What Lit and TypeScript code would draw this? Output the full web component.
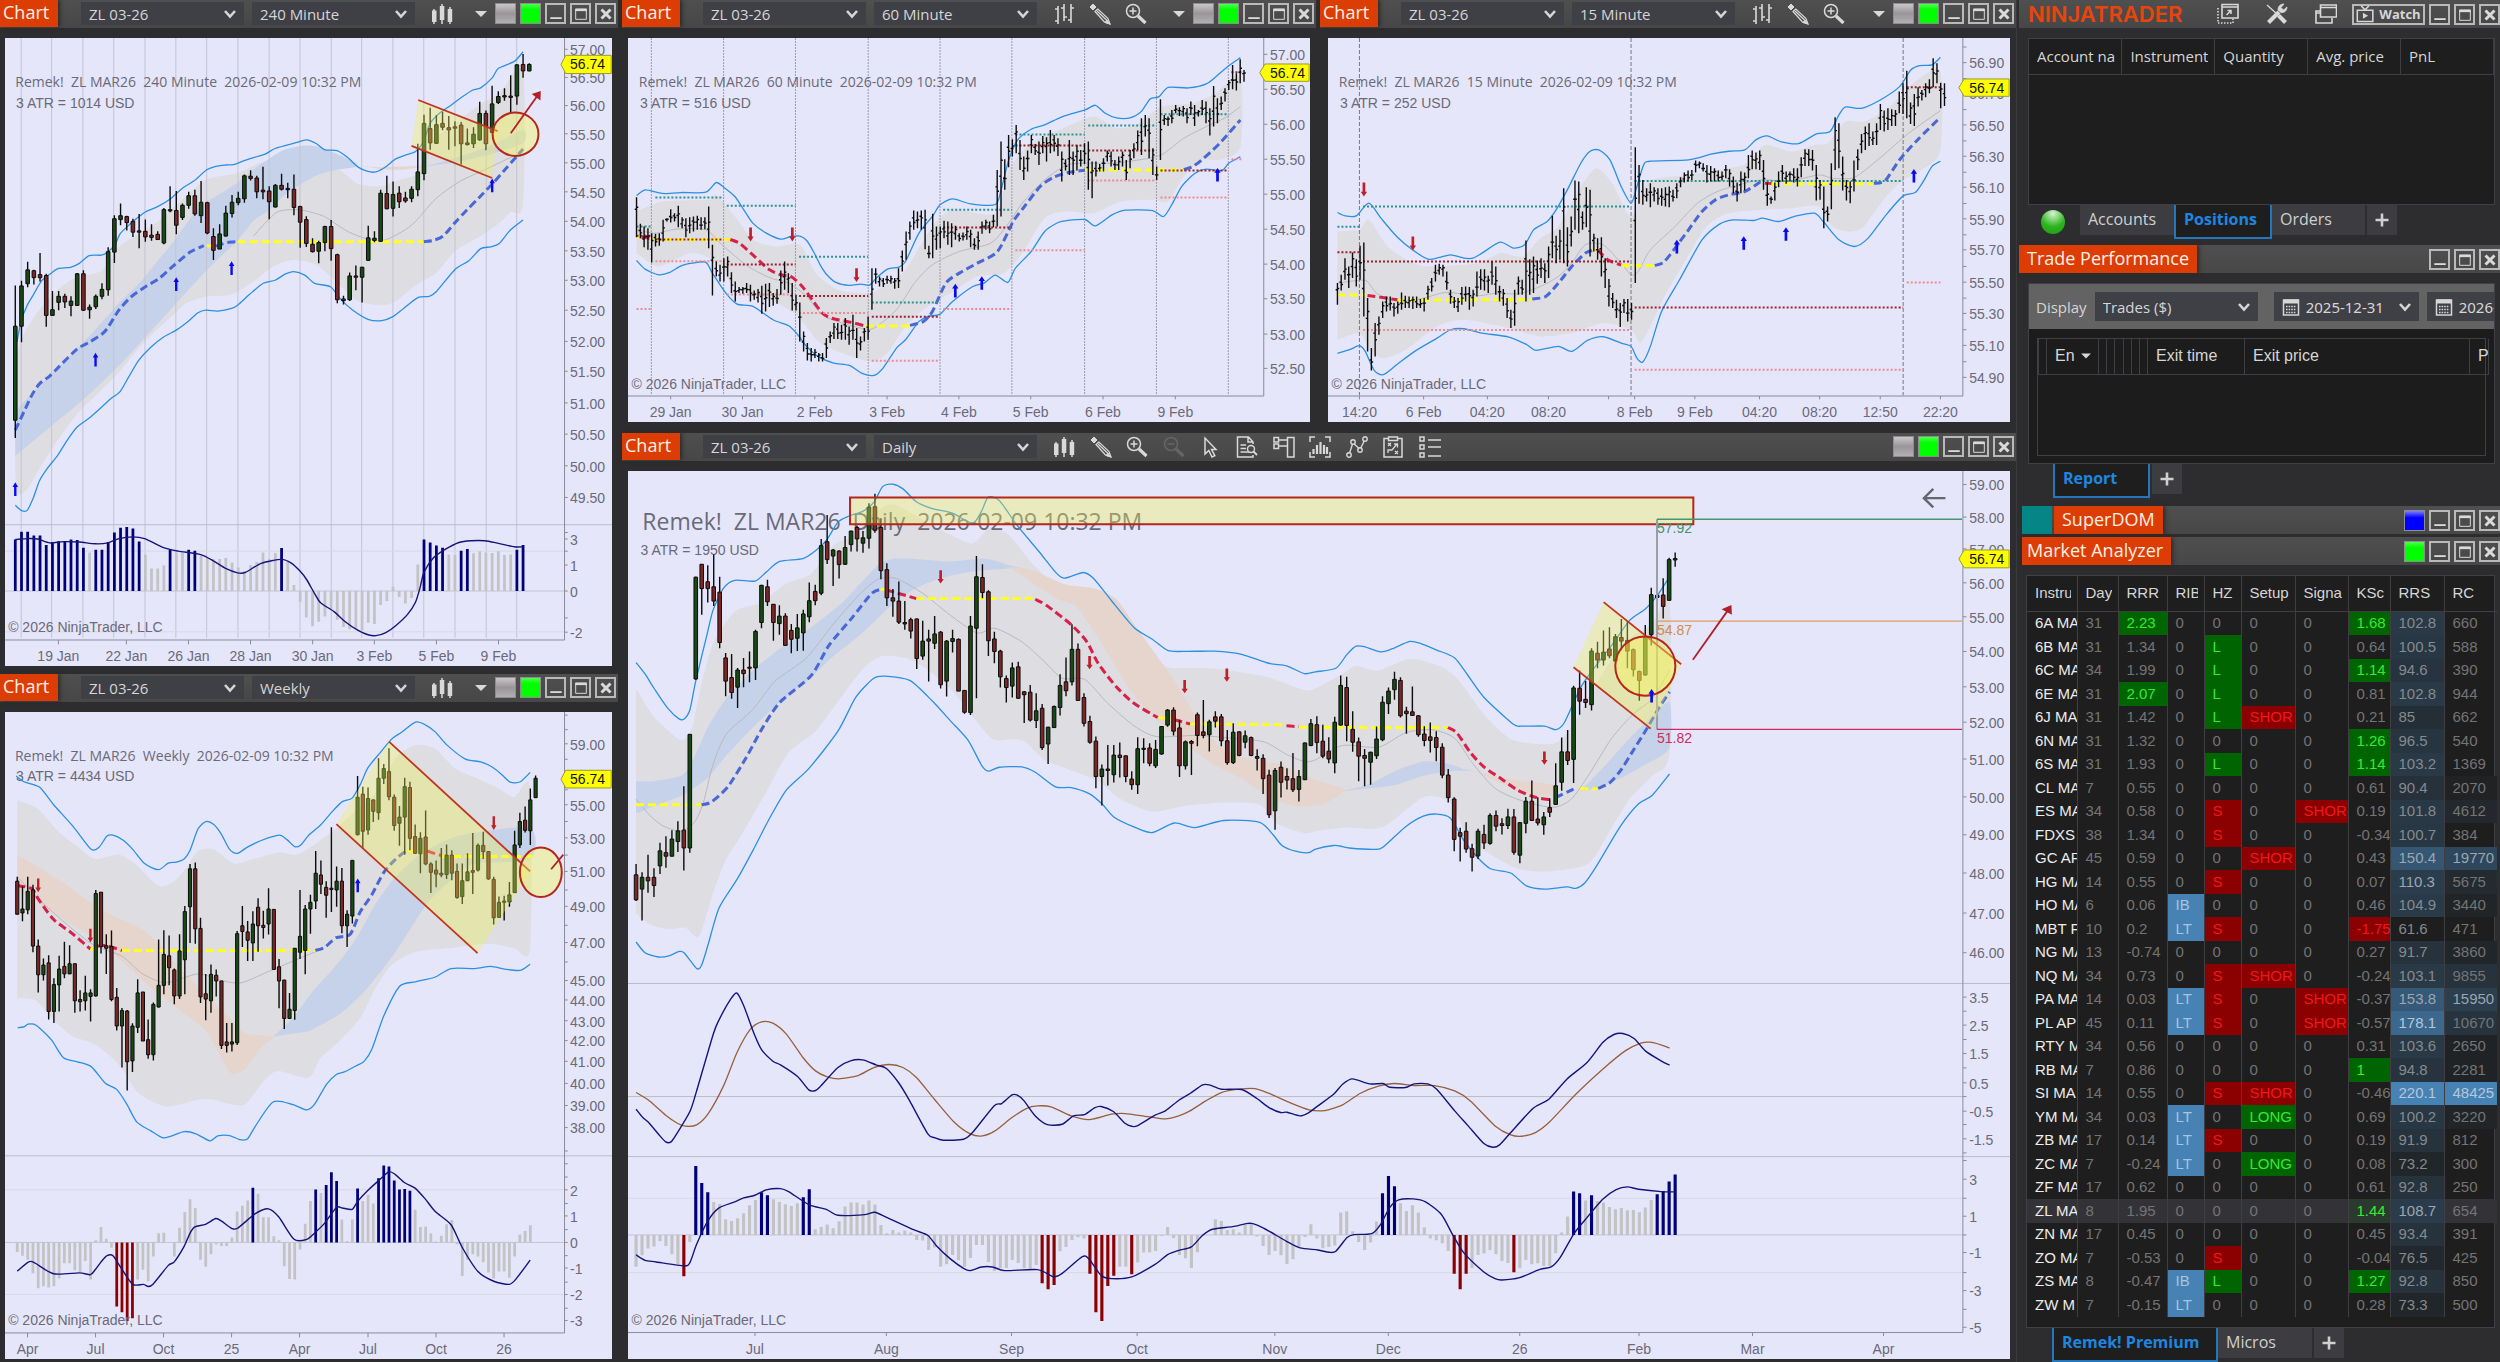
import { LitElement, html, svg, css, nothing, TemplateResult } from "lit";
import { customElement, property } from "lit/decorators.js";
import { classMap } from "lit/directives/class-map.js";

/* ------------------------------------------------------------------ */
/* Geometry helpers                                                    */
/* ------------------------------------------------------------------ */

type Pt = [number, number];

/** Parses "x,y x,y ..." and optionally moves / scales the points. */
const pts = (text: string, dx = 0, dy = 0, ky = 1): Pt[] =>
  text
    .trim()
    .split(/\s+/)
    .map((p) => {
      const [x, y] = p.split(",").map(Number);
      return [x + dx, y * ky + dy] as Pt;
    });

/** Catmull-Rom spline through the points. */
const spline = (p: Pt[]): string => {
  let d = `M${p[0][0]} ${p[0][1]}`;
  for (let i = 0; i < p.length - 1; i++) {
    const a = p[i - 1] ?? p[i];
    const b = p[i];
    const c = p[i + 1];
    const e = p[i + 2] ?? c;
    const f = (n: number) => n.toFixed(1);
    d += `C${f(b[0] + (c[0] - a[0]) / 8)} ${f(b[1] + (c[1] - a[1]) / 8)} ${f(c[0] - (e[0] - b[0]) / 8)} ${f(
      c[1] - (e[1] - b[1]) / 8
    )} ${f(c[0])} ${f(c[1])}`;
  }
  return d;
};

const line = (p: Pt[], cls: string) => svg`<path class=${"ln " + cls} d=${spline(p)} />`;
const area = (p: Pt[], cls: string) => svg`<path class=${cls} d=${spline(p) + "Z"} />`;
const poly = (text: string, cls: string, dx = 0) =>
  svg`<polygon class=${cls} points=${pts(text, dx).map((p) => p.join(",")).join(" ")} />`;
const seg = (x1: number, y1: number, x2: number, y2: number, cls: string) =>
  svg`<line class=${"ln " + cls} x1=${x1} y1=${y1} x2=${x2} y2=${y2} />`;

/** Candles: "high bodyTop bodyBottom low g|r; ..." spaced by step. */
const candles = (x0: number, step: number, w: number, text: string) => {
  let wick = "";
  let up = "";
  let down = "";
  text
    .trim()
    .split(";")
    .forEach((row, i) => {
      const v = row.trim().split(" ");
      const [h, t, b, l] = v.map(Number);
      const x = x0 + step * i;
      wick += `M${x.toFixed(1)} ${h}V${l}`;
      const box = `M${(x - w / 2).toFixed(1)} ${t}h${w}V${Math.max(b, t + 3)}h${-w}Z`;
      if (v[4] === "g") up += box;
      else down += box;
    });
  return svg`<path class="ln wick" d=${wick} /><path class="body up" d=${up} /><path class="body down" d=${down} />`;
};

/** Bars: "high-low ..." spaced by step, with open and close ticks. */
const ohlc = (x0: number, step: number, text: string) => {
  let d = "";
  text
    .trim()
    .split(/\s+/)
    .forEach((row, i) => {
      const [h, l] = row.split("-").map(Number);
      const x = x0 + step * i;
      const o = h + (l - h) * (0.3 + 0.4 * ((i * 7) % 5) / 5);
      const c = h + (l - h) * (0.25 + 0.5 * ((i * 3) % 4) / 4);
      d += `M${x.toFixed(1)} ${h}V${l}M${(x - 4).toFixed(1)} ${o.toFixed(0)}h4M${x.toFixed(1)} ${c.toFixed(0)}h4`;
    });
  return svg`<path class="ln wick" d=${d} />`;
};

/** Histogram: "1245n 1227 ..." where n is navy, r is dark red, plain is grey. */
const histogram = (x0: number, step: number, zero: number, w: number, text: string, dy = 0, ky = 1) => {
  const d: Record<string, string> = { n: "", r: "", g: "" };
  text
    .trim()
    .split(/\s+/)
    .forEach((row, i) => {
      const key = /[nr]$/.test(row) ? row.slice(-1) : "g";
      const y = parseFloat(row) * ky + dy;
      const x = x0 + step * i - w / 2;
      d[key] += `M${x.toFixed(1)} ${zero}V${y.toFixed(1)}h${w}V${zero}Z`;
    });
  return svg`<path class="hg" d=${d.g} /><path class="hn" d=${d.n} /><path class="hr" d=${d.r} />`;
};

/** Small signal arrow; y is the top edge. */
const signal = (x: number, y: number, h: number, dir: "up" | "dn") => {
  const w = 6;
  const head = h * 0.35;
  const d =
    dir === "up"
      ? `M${x} ${y}l${w + 1} ${head}h-4v${h - head}h-6v${head - h}h-4Z`
      : `M${x} ${y + h}l${w + 1} ${-head}h-4v${head - h}h-6v${h - head}h-4Z`;
  return svg`<path class=${dir === "up" ? "sig-up" : "sig-dn"} d=${d} />`;
};

const level = (text: string, cls: string) =>
  text
    .trim()
    .split(/\s+/)
    .map((t) => {
      const [a, b, y] = t.split(/[-@]/).map(Number);
      return seg(a, y, b, y, cls);
    });

const verticals = (xs: number[], y1: number, y2: number, cls: string) => xs.map((x) => seg(x, y1, x, y2, cls));

interface ChartSpec {
  view: [number, number, number, number];
  axisX: number;
  axisY: number;
  tagY: number;
  tagH: number;
  title: string;
  titleAt: Pt;
  bigTitle?: boolean;
  atr: string;
  atrAt: Pt;
  copyAt: Pt;
  prices: [number, string][];
  minor: number[];
  dates: [number, string][];
  datesY: number;
  back: TemplateResult | unknown;
  front: TemplateResult | unknown;
  extra?: { at: Pt; text: string; cls: string }[];
}

const rows = (text: string, dy = 0, ky = 1): [number, string][] =>
  text
    .trim()
    .split(/\s+/)
    .map((t) => {
      const [label, y] = t.split("@");
      return [Number(y) * ky + dy, label];
    });
const days = (text: string): [number, string][] =>
  text
    .trim()
    .split("|")
    .map((t) => {
      const [label, x] = t.split("@");
      return [Number(x), label];
    });

/* ------------------------------------------------------------------ */
/* 240 minute                                                          */
/* ------------------------------------------------------------------ */

const chart240: ChartSpec = {
  view: [12, 88, 1535, 1449],
  axisX: 1427,
  axisY: 1477,
  tagY: 149,
  tagH: 21,
  title: "Remek!  ZL MAR26  240 Minute  2026-02-09 10:32 PM",
  titleAt: [38, 188],
  atr: "3 ATR = 1014 USD",
  atrAt: [40, 237],
  copyAt: [20, 1446],
  prices: rows(
    "57.00@116 56.50@181 56.00@246 55.50@311 55.00@378 54.50@445 54.00@513 53.50@581 53.00@649 52.50@718 52.00@790 51.50@859 51.00@932 50.50@1004 50.00@1077 49.50@1150 3@1246 1@1306 0@1366 -2@1461"
  ),
  minor: [1229, 1272, 1426],
  dates: days("19 Jan@147|22 Jan@319|26 Jan@476|28 Jan@633|30 Jan@790|3 Feb@946|5 Feb@1103|9 Feb@1260"),
  datesY: 1514,
  back: svg`
    ${area(
      pts(
        "38,830 60,770 99,715 150,665 194,640 256,625 300,570 350,540 400,510 450,470 520,415 600,400 660,375 720,368 800,352 850,385 905,425 960,430 1010,415 1056,400 1087,330 1150,285 1215,240 1262,215 1322,165 1322,470 1290,490 1262,515 1215,545 1150,580 1103,630 1056,655 1000,695 965,705 905,695 860,660 800,612 742,600 690,615 640,650 585,680 520,685 470,700 440,725 380,775 340,815 300,860 256,900 200,950 150,1010 100,1080 68,1130 45,1140 38,1100"
      ),
      "band"
    )}
    ${area(
      pts(
        "38,950 99,890 150,845 200,800 256,745 300,700 350,655 400,600 440,555 480,505 520,468 570,440 617,410 650,385 690,360 720,345 760,337 800,338 850,355 905,382 850,392 800,405 760,425 720,450 680,485 640,510 600,555 560,590 500,645 440,705 380,765 320,825 260,880 200,930 140,975 80,1020 38,1052"
      ),
      "cloud-up"
    )}
    ${area(pts("1071,385 1150,365 1244,335 1322,300 1322,330 1244,355 1150,375"), "cloud-up")}
    ${area(pts("905,382 960,386 1040,384 1071,385 1010,392 960,390"), "cloud-dn")}
    ${verticals([53, 130, 209, 287, 366, 444, 522, 601, 680, 758, 837, 914, 993, 1071, 1150, 1229, 1306], 88, 1472, "grid")}
    ${seg(12, 1272, 1427, 1272, "lite")}${seg(12, 1364, 1427, 1364, "grid")}${seg(12, 1458, 1427, 1458, "lite")}
    ${line(pts("640,545 700,490 760,485 820,500 870,530 915,548 970,555 1040,520 1100,460 1160,420 1230,390 1322,350"), "mid")}
  `,
  front: svg`
    ${line(
      pts(
        "42,790 53,740 68,705 84,680 105,648 130,630 146,620 178,617 200,608 225,590 256,589 272,582 290,565 303,540 319,525 340,508 366,490 398,477 429,460 460,435 491,417 522,392 545,384 570,381 590,380 617,371 648,362 670,356 695,343 725,335 750,329 774,323 800,332 821,346 852,348 880,365 905,386 930,396 950,397 975,385 1000,367 1025,358 1050,350 1071,325 1087,285 1110,262 1140,243 1165,226 1195,208 1215,203 1244,180 1260,158 1300,142 1322,120"
      ),
      "env"
    )}
    ${line(
      pts(
        "38,1166 53,1178 68,1178 84,1148 99,1110 120,1080 146,1050 170,1015 194,986 225,965 256,940 280,920 303,904 325,870 350,832 380,802 413,778 445,762 475,742 500,722 520,716 550,718 585,712 601,704 630,680 665,654 695,647 720,633 742,627 770,635 795,654 835,662 860,690 890,715 930,737 965,740 993,731 1020,712 1056,687 1085,684 1103,673 1150,622 1185,602 1215,574 1240,570 1262,562 1290,531 1322,508"
      ),
      "env"
    )}
    ${line(pts("38,993 60,950 80,912 99,886 125,868 150,845 194,806 225,790 256,772 270,759 300,716 330,686 370,660 400,644 440,612 480,582 515,567"), "ma up-c")}
    ${line(pts("522,567 545,569"), "ma flat-c")}
    ${line(pts("545,568 575,560 601,558"), "ma up-c")}
    ${line(pts("601,558 1071,558"), "ma flat-c")}
    ${line(pts("1071,558 1095,555 1120,545 1150,514 1180,485 1210,457 1244,425 1280,388 1305,362 1322,344"), "ma up-c")}
    ${candles(
      38,
      15.66,
      9,
      "659 753 970 1011 g;648 660 753 790 g;604 623 655 663 g;623 625 641 657 r;584 634 641 650 r;632 636 728 754 r;672 715 728 728 g;672 684 698 716 g;678 684 697 711 r;684 695 705 730 g;630 632 705 706 g;624 632 716 718 r;703 709 715 736 g;680 684 708 713 g;654 668 684 691 g;571 581 669 683 g;497 505 582 607 g;470 498 507 520 g;498 500 514 532 r;505 511 536 547 r;494 533 536 573 r;507 534 547 558 r;518 543 548 556 r;534 541 553 554 r;480 484 561 564 g;430 484 487 490 r;441 486 520 541 r;470 474 502 508 g;443 452 474 482 g;438 452 494 498 r;418 467 498 515 g;466 468 538 541 r;527 546 578 600 r;518 540 575 575 g;475 492 545 546 g;450 467 493 502 g;443 458 468 474 g;403 406 459 468 g;393 407 412 417 r;406 411 443 458 r;385 439 443 460 r;430 441 466 506 r;425 428 478 479 g;401 428 437 440 r;422 435 438 458 r;403 437 479 497 r;475 477 513 572 r;499 507 562 570 r;550 564 581 583 r;556 560 580 608 g;521 523 560 580 g;508 523 574 602 r;586 588 692 700 r;683 690 694 703 r;629 637 692 695 g;613 637 640 670 r;616 617 640 698 g;521 549 601 602 g;534 550 555 559 g;438 446 557 558 g;406 447 482 483 r;419 449 481 500 g;430 446 466 480 r;443 457 464 468 r;430 437 458 467 g;332 397 438 453 g;265 285 401 416 g;249 297 330 346 r;266 288 331 332 g;258 285 294 301 r;268 295 300 346 r;280 293 296 338 r;282 289 332 380 r;297 330 334 336 g;294 310 332 342 g;235 262 323 325 g;255 262 332 347 r;198 240 306 307 g;211 223 237 240 g;204 221 223 233 r;174 222 225 262 r;148 150 222 242 g;125 149 164 180 r;146 149 164 165 g"
    )}
    ${poly("1057,231 1258,303 1242,410 1040,337", "zone")}
    ${seg(1057, 231, 1258, 303, "draw")}${seg(1040, 337, 1244, 411, "draw")}
    <ellipse class="ring" cx="1303" cy="310" rx="58" ry="50" />
    ${seg(1291, 308, 1358, 222, "draw red")}${poly("1367,210 1344,217 1366,232", "head")}
    ${signal(38, 1113, 32, "up")}${signal(241, 814, 32, "up")}${signal(445, 640, 32, "up")}${signal(585, 603, 32, "up")}${signal(1244, 412, 32, "up")}
    ${histogram(
      38,
      15.66,
      1364,
      7,
      "1245n 1227n 1227n 1236n 1236n 1258n 1251n 1249n 1249n 1245n 1246n 1264n 1275 1269n 1269n 1251n 1229n 1218n 1216n 1220n 1250n 1280 1312 1312 1305 1269n 1275 1275 1269n 1271n 1282 1288 1290 1290 1288 1298 1310 1318 1304 1297 1275 1290 1276 1265n 1297 1350 1389 1425 1445 1435 1423 1408 1430 1447 1452 1450 1455 1437 1440 1396 1387 1354 1378 1393 1380 1303 1245n 1252n 1259n 1264n 1280 1281 1271n 1267n 1277 1272 1275 1276 1272 1281 1280 1269n 1258n"
    )}
    ${line(
      pts(
        "38,1245 70,1243 95,1244 125,1253 160,1250 200,1251 240,1255 272,1253 300,1243 335,1239 365,1243 413,1264 450,1272 507,1280 540,1295 570,1312 600,1322 620,1321 660,1300 711,1291 735,1299 758,1318 775,1338 795,1370 810,1391 845,1412 870,1433 905,1455 930,1465 950,1467 975,1460 1000,1444 1030,1418 1050,1390 1062,1355 1071,1322 1095,1288 1125,1268 1160,1252 1190,1248 1225,1248 1260,1254 1300,1262 1322,1262"
      ),
      "navy"
    )}
    ${seg(12, 1211, 1547, 1211, "split")}
  `,
};

/* ------------------------------------------------------------------ */
/* Weekly                                                              */
/* ------------------------------------------------------------------ */

const chartWeekly: ChartSpec = {
  view: [12, 97, 1535, 1465],
  axisX: 1427,
  axisY: 1503,
  tagY: 249,
  tagH: 20,
  title: "Remek!  ZL MAR26  Weekly  2026-02-09 10:32 PM",
  titleAt: [37, 196],
  atr: "3 ATR = 4434 USD",
  atrAt: [40, 243],
  copyAt: [20, 1474],
  prices: rows(
    "59.00@171 55.00@309 53.00@384 51.00@460 49.00@539 47.00@621 45.00@707 44.00@751 43.00@798 42.00@843 41.00@890 40.00@940 39.00@990 38.00@1040 2@1181 1@1240 0@1300 -1@1358 -2@1418 -3@1477"
  ),
  minor: [104, 137, 204, 273, 345, 421, 500, 580, 663, 1091, 1120, 1150, 1210, 1269, 1328, 1388, 1447],
  dates: days("Apr@69|Jul@241|Oct@413|25@585|Apr@757|Jul@930|Oct@1102|26@1274"),
  datesY: 1540,
  back: svg`
    ${area(
      pts(
        "43,297 96,317 150,370 200,405 240,430 300,420 340,440 400,490 440,480 470,450 500,412 540,408 590,440 640,430 705,415 750,420 790,400 850,360 900,320 960,270 1000,200 1050,172 1100,180 1150,225 1200,245 1260,270 1300,290 1340,270 1340,630 1300,632 1240,622 1150,630 1050,640 990,670 950,720 910,790 860,840 810,880 780,925 700,910 660,940 620,985 580,985 540,975 500,975 420,990 350,960 300,895 240,850 180,830 130,790 90,750 43,745"
      ),
      "band"
    )}
    ${area(
      pts(
        "43,420 100,450 170,490 230,530 290,560 350,585 400,620 450,675 500,720 540,755 580,790 620,825 690,832 660,855 620,905 585,916 560,880 520,820 480,790 430,755 380,720 330,680 280,640 220,600 150,560 100,530 43,500"
      ),
      "cloud-dn"
    )}
    ${area(
      pts(
        "690,832 740,790 790,730 850,670 900,610 950,530 1000,470 1060,420 1120,390 1180,373 1340,360 1340,430 1200,440 1150,470 1080,530 1000,640 930,720 860,780 780,820"
      ),
      "cloud-up"
    )}
    ${seg(12, 1179, 1427, 1179, "lite")}${seg(12, 1298, 1427, 1298, "grid")}${seg(12, 1416, 1427, 1416, "lite")}
    ${line(pts("43,470 120,540 228,620 308,650 360,690 420,710 500,690 560,705 610,710 690,680 797,640"), "mid")}
  `,
  front: svg`
    ${line(
      pts(
        "40,242 60,255 99,267 135,307 185,357 230,408 250,403 270,378 285,376 310,387 335,408 365,440 400,454 425,439 445,437 465,430 480,410 500,362 520,345 540,352 560,375 580,408 600,417 625,403 660,388 705,376 725,386 745,402 760,398 780,376 810,353 840,322 865,300 890,292 910,262 930,223 960,190 990,158 1015,143 1050,120 1075,126 1100,142 1130,172 1175,203 1215,210 1245,222 1270,240 1290,256 1315,255 1340,234"
      ),
      "env"
    )}
    ${line(
      pts(
        "44,812 60,810 70,804 85,804 100,813 130,840 160,880 195,889 230,900 265,937 295,952 320,985 345,1025 380,1045 410,1061 430,1058 465,1047 495,1052 530,1068 550,1057 580,1056 605,1065 625,1064 645,1035 690,980 740,986 775,998 795,985 825,940 850,918 870,912 900,898 920,888 940,860 970,785 1010,718 1050,708 1100,697 1140,678 1200,678 1240,673 1275,679 1315,682 1340,668"
      ),
      "env"
    )}
    ${line(pts("43,490 80,497 96,520 135,567 180,597 228,634"), "ma down-c")}
    ${line(pts("228,636 244,630"), "ma flat-c")}
    ${line(pts("245,627 268,626 308,637"), "ma down-c")}
    ${line(pts("308,637 797,637"), "ma flat-c")}
    ${line(pts("797,637 820,630 850,608 885,600 910,550 940,510 970,460 1000,430 1025,412"), "ma up-c")}
    ${line(pts("1030,412 1078,412"), "ma flat-c")}
    ${line(pts("1080,412 1115,422"), "ma down-c")}
    ${line(pts("1115,424 1345,424"), "ma flat-c")}
    ${candles(
      43,
      13.24,
      8,
      "470 480 555 555 r;492 543 552 571 g;470 503 545 555 g;488 500 627 641 r;612 627 692 732 r;655 670 692 705 g;648 665 775 793 r;700 714 775 801 g;649 679 715 775 g;617 673 690 700 r;625 667 690 690 g;667 667 751 778 r;727 748 753 775 r;694 733 751 773 g;725 733 741 798 g;500 508 740 741 g;505 505 628 644 r;600 626 632 690 r;592 628 748 752 r;722 743 808 818 r;767 773 808 902 g;772 774 889 954 r;802 808 887 912 g;702 733 811 824 g;731 731 842 842 r;793 839 873 882 r;755 759 873 886 g;612 716 765 766 g;591 646 716 736 g;603 649 676 716 r;678 681 740 759 r;600 638 740 747 g;536 549 658 736 g;441 452 538 620 g;438 452 588 622 r;563 587 742 756 r;690 735 747 795 r;669 691 751 778 g;680 693 706 741 r;706 706 852 860 r;801 844 852 868 r;801 844 849 866 g;593 599 846 851 g;536 581 594 629 r;570 595 614 661 r;548 577 620 661 g;519 539 581 640 r;547 580 585 610 r;496 543 577 601 g;543 544 680 681 r;656 674 706 768 r;703 704 791 815 r;733 770 791 792 g;632 632 773 794 g;500 605 641 656 g;534 543 637 691 g;511 528 543 599 g;412 462 525 543 g;433 466 487 509 r;480 494 512 563 r;358 496 499 550 r;447 480 500 538 g;450 480 581 598 r;546 555 581 629 g;433 433 559 576 g;242 290 375 376 g;266 283 367 405 r;268 293 364 375 g;295 296 322 346 r;202 247 325 341 g;215 225 247 260 g;179 232 289 297 r;284 290 354 366 r;310 335 349 400 g;246 266 335 420 g;255 268 383 410 r;352 379 417 418 r;369 383 418 462 g;320 380 441 444 r;437 441 460 507 r;433 455 464 494 r;405 462 466 471 r;397 421 465 475 g;410 421 462 478 r;440 458 517 520 r;440 479 515 532 g;417 459 479 480 g;371 456 460 509 r;395 399 455 458 g;368 399 413 430 r;412 413 475 477 r;470 476 563 578 r;515 528 562 563 g;513 525 528 569 r;482 511 527 538 g;366 398 506 507 g;325 345 398 405 g;311 342 365 370 r;270 296 366 398 g;241 247 291 292 g"
    )}
    ${poly("983,164 1340,458 1207,643 850,351", "zone")}
    ${seg(983, 164, 1340, 458, "draw")}${seg(850, 351, 1207, 643, "draw")}
    <ellipse class="ring" cx="1367" cy="460" rx="53" ry="56" />
    ${seg(1393, 453, 1424, 420, "draw red")}
    ${signal(96, 474, 31, "dn")}${signal(228, 588, 31, "dn")}${signal(1248, 333, 31, "dn")}${signal(904, 474, 31, "up")}
    ${histogram(
      43,
      13.24,
      1298,
      7,
      "1320 1328 1337 1368 1402 1397 1400 1397 1380 1345 1345 1361 1365 1340 1382 1293 1263 1290 1310 1443r 1456r 1476r 1470r 1382 1360 1386 1330 1277 1276 1298 1330 1265 1229 1200 1220 1337 1353 1325 1303 1306 1306 1287 1228 1215 1203 1174n 1188 1241 1241 1284 1293 1352 1381 1382 1314 1256 1204 1178n 1186 1168n 1139n 1159n 1246 1295 1246 1176n 1204 1190 1210 1153n 1124n 1126n 1158n 1178n 1177n 1181n 1224 1263 1262 1277 1296 1283 1257 1247 1302 1374 1337 1325 1330 1343 1366 1380 1364 1364 1378 1330 1280 1272 1259"
    )}
    ${line(
      pts(
        "43,1363 70,1343 85,1343 135,1369 200,1367 228,1371 240,1360 255,1342 270,1328 285,1328 305,1355 335,1393 362,1393 374,1398 387,1392 425,1350 440,1342 465,1307 480,1277 492,1263 519,1257 545,1244 560,1250 585,1266 600,1266 645,1233 678,1222 704,1240 743,1291 775,1291 797,1275 820,1255 850,1219 865,1220 890,1223 904,1205 930,1180 957,1158 983,1138 1000,1145 1023,1163 1049,1175 1075,1200 1100,1228 1140,1258 1168,1309 1208,1364 1248,1386 1287,1393 1305,1380 1340,1338"
      ),
      "navy"
    )}
    ${seg(12, 1102, 1547, 1102, "split")}
  `,
};

/* ------------------------------------------------------------------ */
/* 60 minute                                                           */
/* ------------------------------------------------------------------ */

const chart60: ChartSpec = {
  view: [22, 114, 1519, 1153],
  axisX: 1438,
  axisY: 1189,
  tagY: 218,
  tagH: 26,
  title: "Remek!  ZL MAR26  60 Minute  2026-02-09 10:32 PM",
  titleAt: [46, 245],
  atr: "3 ATR = 516 USD",
  atrAt: [49, 308],
  copyAt: [30, 1153],
  prices: rows("57.00@165 56.50@270 56.00@375 55.50@480 55.00@585 54.50@690 54.00@795 53.50@899 53.00@1005 52.50@1108"),
  minor: [],
  dates: days("29 Jan@117|30 Jan@277|2 Feb@438|3 Feb@599|4 Feb@759|5 Feb@919|6 Feb@1080|9 Feb@1241"),
  datesY: 1237,
  back: svg`
    ${area(
      pts(
        "41,635 100,605 200,600 218,585 260,650 300,720 350,740 405,735 440,820 490,870 560,880 600,850 640,810 700,680 745,630 840,640 870,510 920,430 1000,380 1060,350 1110,385 1160,370 1210,320 1280,310 1330,280 1386,230 1386,440 1340,480 1300,480 1260,530 1225,605 1190,600 1120,605 1060,640 1000,635 950,655 900,760 860,820 800,830 740,880 690,920 640,980 600,1060 565,1085 520,1070 450,1030 400,950 340,900 260,860 210,780 160,760 90,800 41,760"
      ),
      "band"
    )}
    ${verticals([74, 235, 395, 557, 717, 877, 1039, 1199, 1359], 114, 1187, "session")}
    ${line(
      pts(
        "41,690 83,700 130,688 195,690 235,740 290,800 340,835 380,850 420,890 460,950 540,985 570,985 620,930 660,850 700,795 760,755 830,730 870,670 900,610 950,540 1000,495 1050,490 1100,490 1160,480 1210,465 1260,415 1310,380 1350,355 1386,320"
      ),
      "mid"
    )}
  `,
  front: svg`
    ${line(
      pts(
        "41,587 60,570 85,577 105,581 140,578 195,577 218,548 235,562 260,590 280,630 300,670 330,700 362,718 385,710 405,709 420,722 435,755 450,795 465,825 485,848 515,857 540,853 560,856 575,835 600,808 625,802 640,785 670,700 700,650 717,615 745,597 785,612 840,614 853,570 870,480 890,420 920,388 950,375 990,350 1040,330 1063,316 1085,340 1110,354 1140,354 1165,335 1185,297 1205,290 1225,262 1270,264 1310,252 1340,220 1362,195 1386,173"
      ),
      "env"
    )}
    ${line(
      pts(
        "41,782 60,808 90,825 115,818 140,798 165,790 195,787 210,820 240,880 265,913 300,920 345,960 380,978 400,1005 420,1040 445,1070 480,1090 515,1097 545,1122 570,1127 590,1105 620,1045 640,1020 670,965 690,950 717,943 745,905 790,860 815,850 840,826 868,848 885,805 920,755 950,695 980,668 1000,662 1040,659 1063,678 1100,645 1130,631 1190,632 1215,650 1235,610 1255,560 1285,520 1310,508 1345,512 1360,490 1386,470"
      ),
      "env"
    )}
    ${line(pts("41,708 52,712"), "ma flat-c")}
    ${line(pts("52,712 75,716"), "ma down-c")}
    ${line(pts("75,719 250,719"), "ma flat-c")}
    ${line(pts("250,719 270,730 300,765 335,808 362,825 385,830 410,860 435,905 455,940 475,955 520,968 548,978"), "ma down-c")}
    ${line(pts("550,979 648,979"), "ma flat-c")}
    ${line(pts("650,977 680,965 700,935 730,850 760,820 800,790 845,755 880,665 905,620 940,560 970,532 1005,517 1040,511"), "ma up-c")}
    ${line(pts("1040,510 1260,510"), "ma flat-c")}
    ${line(pts("1260,509 1280,500 1300,480 1340,430 1386,360"), "ma up-c")}
    ${level("41-76@680 83-235@593 242-395@618 403-557@771 565-717@908 724-877@630 885-1039@404 1047-1199@377 1208-1359@343", "dot teal")}
    ${level("41-76@708 83-235@719 242-395@794 403-557@889 565-717@951 724-877@683 885-1039@437 1047-1199@452 1208-1359@512 1366-1390@217", "dot dark")}
    ${level("41-76@928 83-235@784 242-395@884 403-557@940 565-717@1083 724-877@928 885-1039@751 1047-1199@542 1208-1359@593 1366-1390@478", "dot pink")}
    ${ohlc(
      41,
      8.456,
      "592-712 672-715 680-742 685-750 700-788 702-740 700-738 660-725 655-665 628-668 640-665 618-682 652-685 655-712 652-700 650-695 648-690 652-690 652-688 620-745 735-887 785-830 795-845 775-845 770-830 817-880 845-905 862-880 862-882 850-880 855-905 872-900 868-908 858-942 852-935 850-922 880-918 868-912 812-885 785-870 820-880 850-932 885-932 908-1025 995-1055 1030-1082 1045-1085 1048-1075 1060-1085 1060-1085 1015-1075 995-1030 970-1018 970-1018 975-1020 955-1020 980-1035 945-1020 985-1075 1010-1052 985-1025 950-1020 805-930 805-852 830-860 835-862 828-852 828-852 835-867 805-865 752-815 695-780 665-720 632-690 635-685 632-690 630-748 738-775 642-775 680-750 680-745 663-715 665-735 670-742 678-720 700-725 698-722 680-720 690-742 715-750 695-750 665-702 660-690 665-700 645-682 510-680 425-650 478-570 405-502 418-470 375-460 420-510 470-540 452-515 405-460 432-465 425-495 408-460 412-485 390-460 405-455 415-468 455-545 478-512 420-525 455-525 435-512 450-500 430-492 425-570 485-595 485-530 492-515 475-515 452-485 455-500 480-510 470-510 455-500 480-540 450-505 430-475 392-450 355-465 345-410 355-475 445-525 500-540 298-480 345-375 350-378 330-370 315-340 322-348 318-350 325-370 305-345 315-378 330-350 300-345 305-370 325-407 258-380 295-370 290-330 265-305 240-270 195-268 220-272 178-250 210-245"
    )}
    ${signal(295, 683, 42, "dn")}${signal(388, 683, 42, "dn")}${signal(531, 805, 42, "dn")}
    ${signal(751, 852, 41, "up")}${signal(810, 829, 41, "up")}${signal(1335, 504, 41, "up")}
  `,
};

/* ------------------------------------------------------------------ */
/* 15 minute                                                           */
/* ------------------------------------------------------------------ */

const chart15: ChartSpec = {
  view: [27, 114, 1519, 1153],
  axisX: 1441,
  axisY: 1189,
  tagY: 263,
  tagH: 26,
  title: "Remek!  ZL MAR26  15 Minute  2026-02-09 10:32 PM",
  titleAt: [51, 245],
  atr: "3 ATR = 252 USD",
  atrAt: [54, 308],
  copyAt: [35, 1153],
  prices: rows(
    "56.90@190 56.70@283 56.50@377 56.30@471 56.10@564 55.90@659 55.70@752 55.50@849 55.30@943 55.10@1039 54.90@1135"
  ),
  minor: [141, 236, 329, 423, 517, 611, 705, 800, 895, 990, 1086],
  dates: days("14:20@97|6 Feb@240|04:20@382|08:20@518|@652|8 Feb@710|9 Feb@844|04:20@988|08:20@1122|12:50@1257|22:20@1391"),
  datesY: 1237,
  back: svg`
    ${area(
      pts(
        "48,695 97,690 118,660 160,740 210,785 250,800 360,790 410,760 460,770 500,715 540,680 590,560 625,505 660,550 702,650 740,545 830,525 900,510 960,490 1000,435 1060,455 1110,435 1140,430 1180,365 1220,365 1270,330 1308,280 1340,240 1391,215 1391,450 1350,510 1308,540 1270,590 1220,680 1190,695 1150,680 1120,620 1060,625 1000,630 920,640 870,680 820,790 780,880 745,980 722,1030 702,990 640,970 570,1000 500,1010 430,985 330,960 270,980 200,1050 150,1075 120,1050 97,1000 48,1020"
      ),
      "band"
    )}
    ${line(
      pts(
        "48,850 110,842 135,880 182,905 240,895 290,878 360,888 400,880 450,882 500,860 540,830 570,790 600,735 640,735 680,790 702,825 718,815 745,750 800,680 850,610 900,572 990,540 1050,545 1120,525 1150,535 1200,532 1260,470 1320,400 1391,332"
      ),
      "mid"
    )}
    ${verticals([97, 702, 1308], 114, 1187, "session dark")}
  `,
  front: svg`
    ${line(
      pts(
        "48,638 65,648 90,648 118,610 145,655 180,710 215,750 250,778 275,773 300,765 330,775 350,775 370,760 410,727 440,745 465,735 485,690 515,665 535,630 560,570 590,490 610,455 630,450 655,480 680,560 702,610 715,560 730,495 745,484 830,480 880,463 920,454 955,450 980,420 1005,408 1035,425 1075,431 1115,402 1145,395 1165,345 1180,321 1215,325 1257,300 1300,260 1325,210 1345,197 1372,195 1391,172"
      ),
      "env"
    )}
    ${line(
      pts(
        "48,1061 75,1050 97,1038 110,1055 130,1112 150,1125 180,1095 220,1055 270,1015 300,990 330,987 370,1000 430,1012 470,1035 490,1052 540,1040 570,1055 605,1022 640,1011 680,1030 702,1040 715,1075 728,1087 745,1040 770,935 810,840 860,720 900,672 930,660 975,662 995,655 1030,665 1065,650 1110,640 1130,665 1165,720 1200,740 1230,715 1270,645 1308,588 1335,578 1355,540 1372,500 1391,484"
      ),
      "env"
    )}
    ${line(pts("48,886 110,886"), "ma flat-c")}
    ${line(pts("115,887 182,900"), "ma down-c")}
    ${line(pts("182,902 480,899"), "ma flat-c")}
    ${line(pts("482,898 512,890 540,850 570,800 600,760 615,752"), "ma up-c")}
    ${line(pts("617,750 628,750"), "ma flat-c")}
    ${line(pts("628,750 650,780 680,796"), "ma down-c")}
    ${line(pts("680,797 755,797"), "ma flat-c")}
    ${line(pts("755,797 775,787 800,745 830,690 860,635 890,600 920,585 955,575 990,546"), "ma up-c")}
    ${line(pts("1000,550 1015,551"), "ma down-c")}
    ${line(pts("1015,552 1240,552"), "ma flat-c")}
    ${line(pts("1243,551 1268,542 1300,480 1340,420 1391,352"), "ma up-c")}
    ${level("48-97@681 105-702@620 710-1308@543", "dot teal")}
    ${level("48-97@757 105-702@785 710-1308@923 1316-1391@262", "dot dark")}
    ${level("105-702@991 710-1308@1110 1316-1391@848", "dot pink")}
    ${ohlc(
      48,
      8.398,
      "850-915 825-872 775-840 800-865 758-835 778-860 738-840 728-950 895-1055 1045-1112 970-1070 950-1005 905-955 890-935 890-932 910-950 905-942 878-930 888-925 890-925 890-928 890-925 898-925 895-935 858-900 835-875 795-845 792-825 795-830 815-870 870-912 892-925 895-937 862-915 860-905 862-930 870-920 815-890 808-870 808-872 828-880 785-855 800-885 858-905 868-918 895-955 930-985 870-978 830-885 840-885 722-905 778-885 770-880 782-852 775-835 790-850 740-835 648-775 708-790 690-780 565-790 682-800 650-740 542-690 545-700 635-690 562-682 570-770 702-755 715-780 712-830 775-865 838-920 880-925 900-955 910-982 898-940 898-965 910-960 442-850 495-612 540-615 565-605 550-622 562-605 565-615 565-618 562-620 560-622 570-605 550-595 532-562 518-548 512-545 510-540 482-518 485-505 490-515 495-548 498-545 505-545 512-545 515-542 495-535 508-560 530-580 548-605 515-580 518-572 465-535 452-508 458-508 452-510 480-570 548-618 590-612 548-602 515-562 495-545 515-552 515-545 505-548 505-560 472-532 448-498 448-498 450-512 495-602 540-600 560-685 620-665 490-628 352-510 370-505 470-572 540-602 545-610 482-575 448-510 402-460 380-450 370-438 395-435 370-435 312-390 332-395 325-390 328-378 330-378 275-340 250-342 212-355 308-372 282-378 262-320 270-302 250-292 238-280 175-262 190-250 248-325 250-318"
    )}
    ${signal(107, 548, 42, "dn")}${signal(216, 710, 42, "dn")}
    ${signal(804, 720, 41, "up")}${signal(953, 709, 41, "up")}${signal(1047, 682, 41, "up")}${signal(1332, 507, 41, "up")}
  `,
};

/* ------------------------------------------------------------------ */
/* Daily: price pane plus two oscillator panes                         */
/* ------------------------------------------------------------------ */

const HALF = 1555;
const LOW = 1498;
const KY = 0.9333;
const right = (t: string) => pts(t, HALF);
const low = (t: string, dx = 0) => pts(t, dx, LOW, KY);
const lowY = (y: number) => LOW + y * KY;

const chartDaily: ChartSpec = {
  view: [22, 132, 3081, 2485],
  axisX: 2998,
  axisY: 2543,
  tagY: 378,
  tagH: 25,
  title: "Remek!  ZL MAR26  Daily  2026-02-09 10:32 PM",
  titleAt: [54, 273],
  bigTitle: true,
  atr: "3 ATR = 1950 USD",
  atrAt: [50, 352],
  copyAt: [30, lowY(1081)],
  prices: [
    ...rows(
      "59.00@172 58.00@263 57.00@352 56.00@447 55.00@542 54.00@639 53.00@738 52.00@837 51.00@940 50.00@1046 49.00@1152 48.00@1259 47.00@1371 46.00@1482"
    ),
    ...rows("3.5@116 2.5@200 1.5@285 0.5@373 -0.5@458 -1.5@541 3@662 1@773 -1@882 -3@996 -5@1106", LOW, KY),
  ],
  minor: [156, 241, 326, 412, 496, 581, 604, 717, 827, 940, 1050].map(lowY),
  dates: days("Jul@305|Aug@598|Sep@877|Oct@1157|Nov@1464|Dec@1717|26@2010|Feb@2276|Mar@2529|Apr@2821"),
  datesY: lowY(1170),
  extra: [
    { at: [2316, 291], text: "57.92", cls: "t-green" },
    { at: [2316, 577], text: "54.87", cls: "t-orange" },
    { at: [2316, 879], text: "51.82", cls: "t-crimson" },
  ],
  back: svg`
    ${area(
      [
        ...pts(
          "40,740 80,820 140,885 165,850 180,760 210,620 260,525 320,500 370,450 430,420 480,340 530,310 570,250 610,225 660,255 740,310 790,335 830,290 870,310 930,400 990,465 1040,480 1100,555 1150,620 1220,680 1330,685 1450,710 1530,745"
        ),
        ...right(
          "0,740 60,700 90,678 140,690 210,658 280,680 320,720 380,820 440,885 530,895 570,850 610,760 660,660 700,600 750,560 789,500 789,920 750,985 700,1050 660,1130 620,1215 590,1240 510,1253 450,1245 390,1205 340,1160 300,1060 240,1045 150,1128 60,1130 0,1140"
        ),
        ...pts(
          "1530,1145 1470,1120 1430,1065 1350,1060 1260,1070 1190,1085 1120,1050 1070,1000 1000,965 950,940 900,885 840,885 810,850 740,740 680,680 640,655 590,650 550,680 500,760 440,860 380,920 330,1030 280,1140 240,1220 210,1320 180,1435 150,1410 110,1415 70,1400 40,1370"
        ),
      ],
      "band"
    )}
    ${area(
      pts(
        "40,1000 80,1000 140,985 165,945 200,850 240,770 300,690 360,630 430,570 500,500 545,440 580,395 610,378 660,378 740,385 820,378 870,395 900,405 870,405 800,412 740,425 680,450 630,485 590,530 540,590 480,650 430,710 360,780 300,850 240,930 200,990 150,1035 90,1065 40,1090"
      ),
      "cloud-up"
    )}
    ${area(
      pts(
        "870,400 920,408 960,430 1000,450 1060,460 1110,490 1150,560 1190,630 1230,700 1270,780 1310,860 1360,920 1420,940 1480,955 1530,985 1590,1010 1620,1025 1580,1060 1540,1070 1510,1070 1460,1050 1400,1000 1330,955 1270,900 1210,840 1150,760 1100,660 1060,580 1020,510 980,490 930,450"
      ),
      "cloud-dn"
    )}
    ${area(right("60,1028 120,1008 180,970 240,945 290,950 330,966 350,970 300,972 240,985 180,1010 120,1020"), "cloud-up")}
    ${area(right("350,970 400,985 460,1000 530,1010 540,1040 470,1035 420,1010"), "cloud-dn")}
    ${area(right("590,1028 650,950 700,880 750,820 789,780 789,905 740,950 690,985 640,1015"), "cloud-up")}
    ${seg(22, lowY(412), 2998, lowY(412), "split")}${seg(22, lowY(717), 2998, lowY(717), "lite")}
    ${seg(22, lowY(827), 2998, lowY(827), "grid")}${seg(22, lowY(940), 2998, lowY(940), "lite")}
    ${line(
      [
        ...pts(
          "40,1050 70,1095 100,1125 140,1140 170,1115 190,1060 210,960 240,870 300,800 350,720 420,655 480,560 540,475 580,435 620,433 680,475 740,535 800,585 840,572 900,610 950,665 990,712 1040,715 1090,780 1150,845 1200,875 1290,872 1370,880 1440,890 1490,925 1530,945"
        ),
        ...right(
          "0,940 60,900 140,905 200,865 260,856 310,880 350,950 400,1020 460,1055 530,1073 570,1050 610,980 660,880 710,810 750,770 789,690"
        ),
      ],
      "mid"
    )}
  `,
  front: svg`
    ${line(
      [
        ...pts(
          "40,668 60,700 80,740 110,795 135,825 147,826 160,800 173,720 200,580 212,520 235,460 260,438 305,440 330,415 360,385 412,377 440,355 465,325 490,275 515,258 545,245 570,220 590,175 612,169 635,182 665,218 700,237 745,250 790,278 810,245 825,205 850,215 890,285 940,360 975,415 995,432 1037,416 1060,433 1100,495 1150,570 1190,602 1225,634 1260,637 1330,636 1390,645 1450,670 1490,677 1530,699"
        ),
        ...right(
          "0,694 45,684 70,645 90,622 110,624 145,638 170,630 210,609 235,615 270,633 310,655 340,705 375,765 440,840 460,846 510,846 535,856 555,835 590,740 620,685 660,620 700,550 735,518 762,480 789,428"
        ),
      ],
      "env"
    )}
    ${line(
      [
        ...pts(
          "40,1450 60,1480 90,1492 115,1488 135,1477 147,1480 175,1524 186,1515 200,1460 225,1355 265,1275 300,1195 335,1110 375,1025 425,965 490,860 530,765 570,712 595,706 650,718 700,775 740,830 780,885 810,955 825,972 850,961 900,960 930,975 975,1016 1010,1018 1050,1035 1080,1065 1105,1100 1150,1128 1190,1144 1240,1117 1285,1130 1350,1110 1430,1115 1460,1150 1480,1180 1510,1196 1540,1200"
        ),
        ...right(
          "0,1190 40,1180 60,1183 75,1187 130,1191 150,1185 200,1128 240,1098 270,1092 300,1103 330,1165 360,1212 390,1245 435,1257 470,1293 510,1302 560,1296 580,1300 600,1285 625,1240 680,1125 720,1063 750,1040 789,980"
        ),
      ],
      "env"
    )}
    ${line(pts("40,1066 186,1066"), "ma flat-c")}
    ${line(pts("186,1066 208,1058 245,1015 285,935 320,855 360,780 430,705 470,620 520,545 565,475 585,463"), "ma up-c")}
    ${line(pts("585,463 598,464"), "ma flat-c")}
    ${line(pts("598,465 665,489"), "ma down-c")}
    ${line(pts("665,489 930,489"), "ma flat-c")}
    ${line(pts("930,491 955,508 1010,562 1045,610 1070,670 1110,735 1150,782 1203,822"), "ma down-c")}
    ${line(pts("1205,822 1240,826"), "ma flat-c")}
    ${line(pts("1240,828 1275,840"), "ma down-c")}
    ${line(pts("1275,840 1490,842"), "ma flat-c")}
    ${line(pts("1490,845 1518,848"), "ma down-c")}
    ${line(pts("1518,849 1850,850"), "ma flat-c")}
    ${line(right("295,850 315,865 345,920 375,960 410,990 450,1025 490,1045 525,1052"), "ma down-c")}
    ${line(right("535,1046 575,1022"), "ma up-c")}
    ${line(right("590,1021 628,1021"), "ma flat-c")}
    ${line(right("630,1020 655,1005 680,970 705,920 740,850 765,795 789,750"), "ma up-c")}
    ${candles(
      40,
      13.313,
      8,
      "1232 1262 1332 1335 r;1255 1269 1302 1390 g;1206 1269 1279 1312 r;1244 1269 1292 1324 r;1172 1195 1237 1260 g;1154 1200 1210 1242 r;1137 1162 1210 1210 g;1112 1139 1169 1198 g;1014 1137 1187 1250 r;868 869 1187 1200 g;428 429 714 716 g;392 393 461 534 r;396 442 461 500 r;366 456 496 510 r;428 471 612 628 r;641 655 720 762 r;644 710 752 769 r;683 689 737 795 g;655 689 699 737 r;637 681 683 723 r;576 581 683 717 g;450 452 556 572 g;436 456 498 510 r;504 505 556 607 r;508 538 559 590 g;530 538 620 622 r;560 578 603 642 r;532 571 600 636 g;520 532 585 635 g;444 495 540 555 g;450 469 495 508 r;322 341 474 480 g;255 330 380 392 r;350 353 370 454 g;354 356 394 433 r;314 346 393 395 g;299 300 338 357 g;285 290 322 357 r;300 319 334 361 g;222 233 320 349 g;196 232 298 305 r;264 290 411 435 r;390 408 487 510 r;462 487 496 540 r;441 496 555 560 r;496 556 560 576 r;543 548 580 601 r;545 546 657 686 r;551 608 650 660 g;576 602 608 721 r;538 588 614 630 g;580 583 730 741 r;605 608 720 763 g;576 601 609 640 g;601 603 748 748 r;745 746 807 811 r;538 566 808 815 g;370 428 572 768 g;393 430 472 488 r;466 470 607 650 r;582 602 637 670 r;632 636 708 738 r;704 713 738 780 r;668 683 734 766 g;666 680 768 769 r;748 750 758 837 r;731 751 829 833 r;754 803 830 851 g;784 796 906 913 r;848 849 896 952 g;788 791 850 851 g;701 732 794 816 g;654 722 747 762 r;561 631 722 732 g;615 631 774 775 r;754 766 838 847 r;817 833 891 895 r;875 888 987 1020 r;953 966 987 1068 g;899 966 970 1012 r;899 927 982 1004 g;892 927 934 990 r;928 929 987 1003 r;972 994 1010 1024 r;877 909 1010 1036 g;880 908 911 950 r;894 907 950 958 r;885 911 957 963 g;846 847 924 926 g;798 801 843 848 g;793 801 860 872 r;828 851 957 988 r;886 890 957 967 g;885 889 894 983 r;808 814 872 902 r;773 862 872 880 r;828 834 870 917 g;804 820 832 850 r;812 820 887 902 r;857 887 948 954 r;838 863 948 952 g;860 862 928 930 r;858 873 891 908 g;875 878 928 930 r;911 931 936 970 r;925 936 993 1036 r;968 983 1094 1103 r;963 970 1083 1136 g;945 961 1003 1046 r;964 987 997 1023 r;921 993 1024 1030 r;969 987 1023 1057 g;892 893 996 997 g;826 839 900 902 g;818 842 892 922 r;842 888 930 936 r;877 916 938 950 r;820 835 949 978 g;704 732 843 844 g;708 738 844 888 r;804 855 891 918 r;878 890 930 1000 r;910 928 936 1014 r;918 919 947 1010 g;847 882 929 938 g;762 779 884 888 g;738 748 783 812 g;694 715 744 772 g;709 718 817 822 r;792 804 811 867 r;735 806 816 817 r;815 817 870 876 r;846 868 886 902 r;836 876 886 920 r;860 878 906 944 r;894 905 983 992 r;966 983 1046 1060 r;1045 1050 1163 1196 r;1130 1144 1154 1225 r;1115 1140 1190 1200 r;1175 1189 1213 1253 r;1133 1140 1209 1218 g;1122 1149 1173 1190 r;1090 1096 1174 1178 g;1082 1096 1126 1140 r;1104 1119 1124 1149 r;1077 1100 1124 1134 g;1078 1100 1199 1206 r;1115 1116 1207 1230 g;1044 1056 1118 1146 g;998 1056 1110 1110 r;1045 1106 1117 1124 r;1086 1100 1122 1150 g;1048 1074 1087 1100 r;950 1013 1065 1066 g;878 918 1003 1027 g;857 918 942 955 r;733 739 939 1005 g;690 740 776 814 r;720 771 780 795 r;628 636 786 802 g;610 642 661 684 r;578 639 661 676 g;569 630 649 656 r;588 596 664 665 g;546 598 608 634 r;553 606 636 684 r;629 632 688 707 r;690 693 718 775 r;563 596 703 705 g;459 478 590 620 g;450 480 486 521 r;432 479 511 545 r;375 380 494 495 g;360 377 381 400 g"
    )}
    <rect class="zone box" x="517" y="206" width="1880" height="75" />
    ${seg(2316, 267, 2316, 855, "rail")}
    ${seg(2316, 267, 2996, 267, "target")}${seg(2316, 552, 2996, 552, "entry")}${seg(2316, 855, 2996, 855, "stop")}
    ${poly("642,499 815,673 747,853 575,681", "zone", HALF)}
    ${seg(2197, 499, 2370, 673, "draw")}${seg(2130, 681, 2302, 853, "draw")}
    <ellipse class="ring" cx="2290" cy="678" rx="67" ry="83" />
    ${seg(2396, 660, 2474, 522, "draw red")}${poly("927,507 905,519 928,534", "head", HALF)}
    <path class="ln back-arrow" d="M2959 208H2911M2932 182L2911 208L2932 234" />
    ${signal(719, 410, 37, "dn")}${signal(1051, 650, 37, "dn")}${signal(1263, 717, 37, "dn")}${signal(1357, 685, 37, "dn")}${signal(2065, 917, 37, "dn")}
    ${signal(2304, 742, 38, "up")}
    ${line(
      [
        ...low(
          "40,400 70,425 106,468 132,492 150,501 175,497 200,465 235,380 265,280 295,210 320,188 345,192 375,225 412,295 440,335 465,352 492,359 535,349 570,325 605,316 635,325 665,355 705,420 750,490 785,524 812,530 840,515 878,475 910,448 935,440 965,443 1010,470 1050,481 1100,465 1130,463 1180,472 1220,479 1250,470 1275,455 1310,425 1345,400 1383,390 1420,388 1450,402 1500,432 1540,452 1568,455"
        ),
        ...low(
          "30,451 60,437 100,402 140,381 175,373 220,379 265,379 310,395 345,425 400,500 435,527 460,531 490,520 520,490 580,405 640,330 690,275 725,252 745,249 770,257 789,267",
          HALF
        ),
      ],
      "brown"
    )}
    ${line(
      [
        ...low(
          "40,450 55,475 68,490 90,525 106,548 118,548 130,525 160,457 175,395 212,225 225,182 252,118 265,102 280,140 305,230 320,272 345,306 362,317 400,352 425,392 440,394 452,380 490,325 518,305 545,302 575,317 598,328 625,370 650,425 690,523 705,535 725,543 770,540 790,520 838,440 855,433 878,407 890,408 905,425 930,470 957,496 990,495 1015,470 1040,466 1062,446 1077,442 1104,457 1130,492 1145,501 1157,500 1197,468 1220,455 1250,423 1275,403 1303,377 1318,377 1345,390 1390,391 1424,418 1451,445 1477,460 1491,459 1520,470 1540,460"
        ),
        ...low(
          "5,440 40,405 60,375 82,359 120,374 150,373 165,384 200,385 220,374 250,374 270,390 310,455 340,500 375,553 395,564 410,557 435,520 485,447 520,420 560,360 605,310 640,250 665,226 685,223 710,238 735,275 770,305 789,318",
          HALF
        ),
      ],
      "navy"
    )}
    ${histogram(
      40,
      13.313,
      lowY(827),
      7,
      "922 888 868 862 846 860 885 915 951r 848 620n 671n 699n 728 734 780 785 777 762 738 722 699n 708n 720 728 735 740 732 714n 690n 810 803 796 807 786 742 730 730 736 724 736 797 822 812 820 814 820 842 844 872 865 922 915 887 903 922 896 857 857 908 935 926 926 902 911 926 928 917 972r 990r 977r 876 863 842 834 838 943r 1059r 1085r 980r 949r 922 922 945r 910 880 880 875 830 803 836 887 897 926 879 830 827 780 785 812 810 820 797 795 832 860 887 875 888 914 900 865 833 795 838 867 863 859 760 756 816 848 872 850 787 702n 650n 681n 732 755 738 760 804 838 843 852 875 943r 990r 943r 926 887 883 872 885 905 911 939r 927 902 915 912 920 920 882 820 772 697n 702n 724 708n 725 730 743 750 746 753 752 759 745 722 705n 695n 667n 646n",
      LOW,
      KY
    )}
    ${line(
      [
        ...low(
          "40,887 60,903 85,908 147,920 160,910 175,855 200,785 225,746 260,728 280,716 305,708 330,692 362,688 380,697 425,736 465,751 490,768 550,766 572,759 600,775 660,812 690,828 710,860 740,898 770,927 785,934 810,923 835,923 862,934 935,931 970,952 990,942 1035,892 1050,900 1077,949 1100,958 1145,953 1197,915 1225,886 1250,873 1278,863 1303,828 1325,810 1370,802 1400,793 1415,793 1440,807 1490,846 1520,866 1560,872"
        ),
        ...low(
          "30,879 45,876 70,835 85,826 125,823 145,795 165,745 185,722 218,719 245,728 280,765 305,825 330,880 375,938 400,958 415,962 455,955 500,930 525,923 545,895 575,825 600,783 640,720 670,691 695,683 720,690 770,697 802,698",
          HALF
        ),
      ],
      "navy"
    )}
    ${seg(22, lowY(73), 3103, lowY(73), "split")}${seg(22, lowY(592), 3103, lowY(592), "split")}
  `,
};

/* ------------------------------------------------------------------ */
/* Icons                                                               */
/* ------------------------------------------------------------------ */

const glyphs: Record<string, unknown> = {
  candles: svg`<path d="M3 6v15M11 1v20M19 4v17" stroke-width="1.5"/><path class="f" d="M1 7.500h4.500v11.500H1zM8.800 3h4.500v14H8.800zM16.700 6h4.500v13h-4.500z" stroke="none"/>`,
  bars: svg`<path d="M5 3v18M5 18H2M11 1v17M11 5H8M11 14h3M18 1v19M18 5h3M18 17h-3M2 6h3" stroke-width="1.600"/>`,
  pencil: svg`<path d="M1 4l3-3 3 3-3 3z" class="f" stroke-width="1"/><path d="M6 8.500L8.800 6 19 15.500l2 5.500-5.500-2zM8 8l10 9.500M6 8.500l9.500 10.500" stroke-width="1.200"/><path class="f" d="M18 17l3 4-5-1.500z"/>`,
  zoomin: svg`<circle cx="8" cy="8" r="6.500" stroke-width="1.500"/><path d="M8 4.500v7M4.500 8h7" stroke-width="1.500"/><path d="M13 13l7.500 7" stroke-width="3.200"/>`,
  zoomout: svg`<circle cx="8" cy="8" r="6.500" stroke-width="1.500"/><path d="M4.500 8h7" stroke-width="1.500"/><path d="M13 13l7.500 7" stroke-width="3.200"/>`,
  cursor: svg`<path d="M6 2v16l3.800-3.600L13 21l2.800-1.300-3.200-6.200H17z" stroke-width="1.500"/>`,
  docsearch: svg`<path d="M17 8V6l-4.500-5H1.500v20H17v-2M12 1v5h5M4.500 9H10M4.500 12.500H10M4.500 16H13" stroke-width="1.500"/><circle cx="15" cy="13" r="3.500" stroke-width="1.400"/><path d="M17.500 15.500L21 19" stroke-width="1.800"/>`,
  panel: svg`<path d="M1 1.500h4.500V6H1zM1 8h4.500v4.500H1zM5.500 4H14M5.500 10H14M14.500 1.500H21V21h-6.500z" stroke-width="1.500"/>`,
  frame: svg`<path d="M1 6V1h5M16 1h5v5M21 16v5h-5M6 21H1v-5" stroke-width="1.500"/><path d="M4.500 18v-5M8 18V9M11.500 18V6M15 18V9M18 18v-7" stroke-width="2.200"/>`,
  nodes: svg`<circle cx="3" cy="19" r="2.200" stroke-width="1.400"/><circle cx="7" cy="6" r="2.200" stroke-width="1.400"/><circle cx="14" cy="14" r="2.200" stroke-width="1.400"/><circle cx="19" cy="3" r="2.200" stroke-width="1.400"/><path d="M3.600 17L6.500 8M8.200 8l4.600 4.200M14.800 12l3.400-7" stroke-width="1.400"/>`,
  strategy: svg`<path d="M6 2.500H2V21h18V2.500h-4M6.500 1h9v3.500h-9z" stroke-width="1.500"/><path d="M6 7l3 3M9 7l-3 3M13 15l3 3M16 15l-3 3M6 17v-3h4l5-6M12 8h3.500v3.500" stroke-width="1.300"/>`,
  list: svg`<path d="M1 1h4v4H1zM1 9h4v4H1zM1 17h4v4H1z" stroke-width="1.500"/><path d="M9 4h13M9 11h13M9 20h13" stroke-width="1.600"/>`,
  newwin: svg`<path d="M5 14V1.500h16V15H5zM5 4h16" stroke-width="1.600"/><path d="M9.500 12l4-4M10.500 7.500h3.500V11" stroke-width="1.500"/><path d="M1 5v15h15v-4" stroke-width="1.600" stroke-dasharray="1.500 1.500"/>`,
  tools: svg`<path d="M2.500 19.500L13 9" stroke-width="4"/><path class="f" d="M12 7c0-3.500 2-6 6-6l-3 3.500 2.500 2.500 3.500-3c0 4-3 6-6 5.500z" stroke-width="0.800"/><path d="M1 2l10 9" stroke-width="1.300"/><path d="M12.500 12.500l7 7" stroke-width="4"/>`,
  windows: svg`<path d="M5.500 2h16v12h-16zM5.500 4.500h16" stroke-width="1.600"/><path d="M5 8H1v12h16v-5M1 10h4" stroke-width="1.600"/>`,
  tv: svg`<path d="M1.500 6h18v13h-18zM6 1l4.500 4.500L15 1" stroke-width="1.800"/><path class="f" d="M8 9l6 3.500-6 3.500z" stroke="none"/>`,
  calendar: svg`<path d="M3.500 4h15v15h-15z" stroke-width="1.500"/><path d="M3.500 5.500h15" stroke-width="4"/><path d="M6 10.500h10M6 13.500h10M6 16.500h10" stroke-width="1.600" stroke-dasharray="1.600 1"/>`,
  chevron: svg`<path d="M6 8l5 5.500L16 8" stroke-width="2.600"/>`,
  caret: svg`<path class="f" d="M5 8h12l-6 6z" stroke="none"/>`,
  min: svg`<path d="M4 16h14" stroke-width="2.200"/>`,
  max: svg`<path d="M4.500 5h13v12.500h-13z" stroke-width="1.200"/><path d="M4 6h14" stroke-width="3"/>`,
  close: svg`<path d="M5.500 5.500l11 11M16.500 5.500l-11 11" stroke-width="3.600"/>`,
  plus: svg`<path d="M11 4.500v13M4.500 11h13" stroke-width="2.600"/>`,
};

const icon = (name: string) =>
  html`<svg class="ico" viewBox="0 0 22 22" aria-hidden="true">${glyphs[name]}</svg>`;

/* ------------------------------------------------------------------ */
/* Shared styles                                                       */
/* ------------------------------------------------------------------ */

const shared = css`
  :host {
    --frame: #2d2d30;
    --bar: #4a4a4a;
    --field: #3f3f46;
    --edge: #3f3f46;
    --ink: #d6d6d6;
    --ui: "Open Sans", "Noto Sans", sans-serif;
    --data: "Liberation Sans", Arial, sans-serif;
    font-family: var(--ui);
    color: var(--ink);
  }
  *,
  *::before,
  *::after {
    box-sizing: border-box;
  }
  button,
  select {
    margin: 0;
    border: 0;
    padding: 0;
    border-radius: 0;
    color: inherit;
    font-family: inherit;
  }
  .ico {
    display: block;
    width: 22px;
    height: 22px;
    fill: none;
    stroke: currentColor;
  }
  .ico .f {
    fill: currentColor;
  }
  .bar {
    display: flex;
    align-items: center;
    height: 28px;
    flex: none;
    background: linear-gradient(#4f4f4f, #474747);
    min-width: 0;
  }
  .name {
    align-self: stretch;
    display: flex;
    align-items: center;
    margin: 0;
    background: #dc3d05;
    color: #fff0e6;
    font-size: 18px;
    font-weight: 400;
    line-height: 24px;
    white-space: nowrap;
    box-shadow: 2px 0 4px #2a2a2a;
  }
  .grow {
    flex: 1;
  }
  .ctl {
    display: flex;
    gap: 4px;
    flex: none;
  }
  .ctl button {
    display: grid;
    place-items: center;
    width: 21px;
    height: 21px;
    border: 2px solid #b9b9b9;
    background: transparent;
    color: #dadada;
  }
  .ctl button .ico {
    width: 18px;
    height: 18px;
  }
  .ctl .link {
    border: 1px solid #8d8d8d;
  }
  .ctl .grey {
    background: linear-gradient(#c9c5c8, #999599 50%, #b3b0b3);
  }
  .ctl .green {
    background: linear-gradient(#4cff4c, #00ff00 30%);
  }
  .ctl .blue {
    background: linear-gradient(#8080ff, #0000ff 35%);
  }
  .pick {
    display: grid;
    align-items: center;
    flex: none;
  }
  .pick > * {
    grid-area: 1 / 1;
  }
  .pick > .ico {
    justify-self: end;
    margin-right: 3px;
    pointer-events: none;
  }
  .pick select {
    appearance: none;
    width: 100%;
    background: var(--field);
    color: var(--ink);
    font-size: 15px;
    line-height: 20px;
    padding: 0 8px;
  }
`;

const controls = (colours: string[]) => html`
  <div class="ctl">
    ${colours.map((c) => html`<button class=${"link " + c} aria-label=${c + " link"}></button>`)}
    <button aria-label="Minimize">${icon("min")}</button>
    <button aria-label="Maximize">${icon("max")}</button>
    <button aria-label="Close">${icon("close")}</button>
  </div>
`;

/* ------------------------------------------------------------------ */
/* Chart window                                                        */
/* ------------------------------------------------------------------ */

@customElement("chart-window")
export class ChartWindow extends LitElement {
  @property({ attribute: false }) spec!: ChartSpec;
  @property({ attribute: false }) tools: string[] = [];
  @property() interval = "";
  @property({ type: Boolean }) menu = false;

  static styles = [
    shared,
    css`
      :host {
        display: flex;
        flex-direction: column;
        min-width: 0;
        min-height: 0;
        background: var(--frame);
      }
      .name {
        padding: 0 9px 3px 3px;
        width: 58px;
      }
      .fields {
        display: flex;
        gap: 8px;
        margin-left: 23px;
      }
      .pick {
        width: 163px;
      }
      .pick select {
        height: 23px;
      }
      .tools {
        display: flex;
        gap: 14px;
        margin-left: 16px;
      }
      .tools.wide {
        flex: 0 1 388px;
        gap: 0;
        justify-content: space-between;
      }
      .tool {
        background: none;
        color: #d9d9d9;
      }
      .tool:disabled {
        color: #666;
      }
      .more {
        margin-right: 3px;
        background: none;
        color: #d9d9d9;
      }
      .bar {
        padding-right: 2px;
        padding-bottom: 1px;
      }
      .plot {
        flex: 1;
        min-height: 0;
        display: flex;
        margin: 10px 6px 0 var(--inset, 6px);
        background: #e6e6fa;
      }
      .surface {
        flex: 1;
        width: 100%;
        min-width: 0;
        height: auto;
        overflow: hidden;
      }
      text {
        font-family: var(--data);
        font-size: 14px;
        fill: #6a6a78;
        dominant-baseline: central;
        white-space: pre;
      }
      .date {
        text-anchor: middle;
      }
      .title {
        font-family: var(--ui);
      }
      .title.big {
        font-size: 23px;
      }
      .now {
        fill: #111;
      }
      .t-green {
        fill: #3f9468;
      }
      .t-orange {
        fill: #cf8b4a;
      }
      .t-crimson {
        fill: #cf2a5c;
      }
      .ln {
        fill: none;
        vector-effect: non-scaling-stroke;
        stroke-width: 1;
      }
      .band {
        fill: #dddde2;
      }
      .cloud-up {
        fill: #c6d2ea;
      }
      .cloud-dn {
        fill: #e5d5cc;
      }
      .grid {
        stroke: #c3c3d3;
      }
      .lite {
        stroke: #d8d8e6;
      }
      .split {
        stroke: #bcbcc8;
      }
      .axis {
        stroke: #8a8a9a;
      }
      .session {
        stroke: #9c9cac;
        stroke-dasharray: 2 1;
      }
      .session.dark {
        stroke: #77777f;
        stroke-dasharray: 4 2;
      }
      .mid {
        stroke: #b9b9c0;
      }
      .env {
        stroke: #2b90e0;
        stroke-width: 1.3;
      }
      .ma {
        stroke-width: 3;
        stroke-dasharray: 8 4;
      }
      .up-c {
        stroke: #4a67d6;
      }
      .down-c {
        stroke: #d8204a;
      }
      .flat-c {
        stroke: #ffff1e;
      }
      .wick {
        stroke: #0c0c0c;
        stroke-width: 1.4;
      }
      .body {
        stroke: #0c0c0c;
        stroke-width: 1;
        vector-effect: non-scaling-stroke;
      }
      .up {
        fill: #174a14;
      }
      .down {
        fill: #7d2626;
      }
      .hg {
        fill: #c3c3c6;
      }
      .hn {
        fill: #00007a;
      }
      .hr {
        fill: #8b0000;
      }
      .navy {
        stroke: #14147c;
        stroke-width: 1.4;
      }
      .brown {
        stroke: #96603f;
        stroke-width: 1.3;
      }
      .dot {
        stroke-width: 2;
        stroke-dasharray: 2 2;
      }
      .teal {
        stroke: #2a9490;
      }
      .dot.dark {
        stroke: #a0202c;
      }
      .pink {
        stroke: #f08a92;
      }
      .zone {
        fill: #f0f050;
        fill-opacity: 0.35;
      }
      .box {
        stroke: #b5261c;
        stroke-width: 2;
        vector-effect: non-scaling-stroke;
      }
      .draw {
        stroke: #c2351d;
        stroke-width: 1.8;
      }
      .draw.red {
        stroke: #b02028;
      }
      .ring {
        fill: #f5f550;
        fill-opacity: 0.4;
        stroke: #b5261c;
        stroke-width: 2;
        vector-effect: non-scaling-stroke;
      }
      .head {
        fill: #b02028;
      }
      .sig-up {
        fill: #0a0af0;
      }
      .sig-dn {
        fill: #c01f2a;
      }
      .rail {
        stroke: #9d9daa;
        stroke-width: 2;
      }
      .target {
        stroke: #45986c;
        stroke-width: 1.4;
      }
      .entry {
        stroke: #dc9c60;
        stroke-width: 1.4;
      }
      .stop {
        stroke: #cf2a5c;
        stroke-width: 1.4;
      }
      .back-arrow {
        stroke: #66666e;
        stroke-width: 2.4;
      }
      .tag {
        fill: #ffff00;
        stroke: #9a9a30;
        stroke-width: 1;
        vector-effect: non-scaling-stroke;
      }
    `,
  ];

  private label(at: Pt, text: string, cls: string) {
    const [x0, y0, w, h] = this.spec.view;
    return svg`<text class=${cls} x=${((at[0] - x0) / w) * 100 + "%"} y=${((at[1] - y0) / h) * 100 + "%"}>${text}</text>`;
  }

  private layer(content: unknown) {
    return svg`<svg width="100%" height="100%" viewBox=${this.spec.view.join(" ")} preserveAspectRatio="none">${content}</svg>`;
  }

  render() {
    const s = this.spec;
    const [x0, y0, w] = s.view;
    const ticks = [...s.prices.map((p) => p[0] - 2), ...s.minor];
    const edge = x0 + w;
    const tag = `${s.axisX - 9},${s.tagY} ${s.axisX + 3},${s.tagY - s.tagH} ${edge - 2},${s.tagY - s.tagH} ${edge - 2},${s.tagY + s.tagH} ${s.axisX + 3},${s.tagY + s.tagH}`;
    return html`
      <header class="bar">
        <h2 class="name">Chart</h2>
        <div class="fields">
          <label class="pick">
            <select aria-label="Instrument"><option>ZL 03-26</option></select>
            ${icon("chevron")}
          </label>
          <label class="pick">
            <select aria-label="Interval"><option>${this.interval}</option></select>
            ${icon("chevron")}
          </label>
        </div>
        <div class=${classMap({ tools: true, wide: this.tools.length > 5 })}>
          ${this.tools.map(
            (t) => html`<button class="tool" aria-label=${t} ?disabled=${t === "zoomout"}>${icon(t)}</button>`
          )}
        </div>
        <span class="grow"></span>
        ${this.menu ? html`<button class="more" aria-label="More">${icon("caret")}</button>` : nothing}
        ${controls(["grey", "green"])}
      </header>
      <div class="plot">
        <svg class="surface" role="img" aria-label=${s.title}>
          ${this.layer(s.back)}
          ${this.label(s.titleAt, s.title, s.bigTitle ? "title big" : "title")}
          ${this.label(s.atrAt, s.atr, "note")}
          ${this.layer(svg`
            ${s.front}
            ${seg(s.axisX, y0, s.axisX, s.axisY, "axis")}
            ${seg(x0, s.axisY, s.axisX, s.axisY, "axis")}
            ${ticks.map((y) => seg(s.axisX, y, s.axisX + 8, y, "axis"))}
            ${s.dates.map(([x]) => seg(x, s.axisY, x, s.axisY + 10, "axis"))}
          `)}
          ${(s.extra ?? []).map((e) => this.label(e.at, e.text, e.cls))}
          ${s.prices.map(([y, t]) => this.label([s.axisX + 14, y], t, "price"))}
          ${s.dates.map(([x, t]) => (t ? this.label([x, s.datesY], t, "date") : nothing))}
          ${this.label(s.copyAt, "© 2026 NinjaTrader, LLC", "note")}
          ${this.layer(svg`<polygon class="tag" points=${tag} />`)}
          ${this.label([s.axisX + 14, s.tagY], "56.74", "now")}
        </svg>
      </div>
    `;
  }
}

/* ------------------------------------------------------------------ */
/* Control center and trade performance                                */
/* ------------------------------------------------------------------ */

const tabStyles = css`
  .tabs {
    display: flex;
    align-items: flex-start;
    height: 34px;
    flex: none;
    font-size: 16px;
  }
  .tabs button {
    height: 30px;
    padding: 0 8px 2px;
    background: #3c3c41;
    color: #d0d0d0;
    font-size: 16px;
    text-align: left;
  }
  .tabs .on {
    height: 34px;
    padding: 0 8px 4px;
    border: 2px solid #2577bd;
    border-top: 0;
    background: #1e1e1e;
    color: #1f86e0;
    font-weight: 700;
  }
  .tabs .add {
    width: 30px;
    padding: 0 4px;
    margin-left: 2px;
  }
  table {
    border-collapse: collapse;
    table-layout: fixed;
    width: 100%;
    font-size: 15px;
  }
  th {
    font-weight: 400;
    text-align: left;
    padding: 0 6px 0 8px;
    height: 35px;
    border: 1px solid #3f3f43;
  }
  th span {
    display: block;
    overflow: hidden;
    white-space: nowrap;
  }
`;

@customElement("control-center")
export class ControlCenter extends LitElement {
  static styles = [
    shared,
    tabStyles,
    css`
      :host {
        display: block;
        flex: none;
      }
      .brand {
        margin: 0 35px 0 9px;
        font-family: Inter, sans-serif;
        font-size: 22px;
        line-height: 28px;
        font-weight: 600;
        color: #e8450c;
      }
      .tools {
        display: flex;
        gap: 27px;
      }
      .tools button {
        background: none;
        color: #d9d9d9;
      }
      .watch {
        display: flex;
        align-items: center;
        justify-content: center;
        gap: 4px;
        width: 73px;
        height: 21px;
        margin-right: 4px;
        border: 2px solid #b9b9b9;
        background: none;
        font-size: 13px;
        line-height: 16px;
        font-weight: 700;
      }
      .watch .ico {
        width: 19px;
        height: 19px;
      }
      .box {
        margin: 10px 5px 0 9px;
        height: 167px;
        background: #1e1e1e;
        border: 1px solid var(--edge);
      }
      .box th:first-child {
        border-left: 0;
      }
      .box th {
        border-top: 0;
      }
      .tabs {
        padding-left: 22px;
        height: 40px;
      }
      .lamp {
        width: 24px;
        height: 24px;
        margin: 5px 15px 0 0;
        border-radius: 50%;
        background: radial-gradient(circle at 50% 15%, #d6f5cf, #2eb41f 55%, #1c9c12);
      }
      .acc {
        width: 94px;
      }
      .on {
        width: 98px;
      }
      .ord {
        width: 93px;
      }
    `,
  ];

  render() {
    return html`
      <header class="bar">
        <h1 class="brand">NINJATRADER</h1>
        <div class="tools">
          <button aria-label="New">${icon("newwin")}</button>
          <button aria-label="Tools">${icon("tools")}</button>
          <button aria-label="Workspaces">${icon("windows")}</button>
        </div>
        <span class="grow"></span>
        <button class="watch">${icon("tv")}Watch</button>
        ${controls([])}
      </header>
      <div class="box">
        <table>
          <thead>
            <tr>
              ${["Account na", "Instrument", "Quantity", "Avg. price", "PnL"].map(
                (t) => html`<th><span>${t}</span></th>`
              )}
            </tr>
          </thead>
        </table>
      </div>
      <nav class="tabs">
        <span class="lamp" role="img" aria-label="Connected"></span>
        <button class="acc">Accounts</button>
        <button class="on">Positions</button>
        <button class="ord">Orders</button>
        <button class="add" aria-label="Add tab">${icon("plus")}</button>
      </nav>
    `;
  }
}

@customElement("trade-performance")
export class TradePerformance extends LitElement {
  static styles = [
    shared,
    tabStyles,
    css`
      :host {
        display: block;
        flex: none;
        font-family: var(--ui);
      }
      .name {
        padding: 0 8px 2px;
      }
      .panel {
        margin: 10px 5px 0 9px;
        height: 181px;
        background: #1c1c1c;
        border: 1px solid var(--edge);
        overflow: hidden;
      }
      .filters {
        display: flex;
        align-items: center;
        gap: 8px;
        height: 45px;
        padding-left: 7px;
        background: #636363;
        font-size: 15px;
        white-space: nowrap;
      }
      .filters select {
        height: 29px;
      }
      .kind {
        width: 163px;
        margin-right: 8px;
      }
      .when {
        width: 145px;
      }
      .when .cal {
        justify-self: start;
        margin-left: 6px;
      }
      .when select {
        padding-left: 32px;
        font-family: "Noto Sans", sans-serif;
      }
      .grid {
        height: 118px;
        margin: 9px 8px;
        border: 1px solid var(--edge);
      }
      .grid th {
        font-family: var(--data);
        font-size: 16px;
        border-top: 0;
      }
      .grid .thin,
      .grid .last {
        padding-right: 0;
      }
      .grid .thin {
        padding-left: 0;
      }
      .grid .order {
        padding-right: 3px;
      }
      .sort {
        display: flex;
        align-items: center;
        justify-content: space-between;
      }
      .sort .ico {
        width: 18px;
        height: 18px;
        flex: none;
      }
      .tabs {
        padding-left: 34px;
        height: 42px;
      }
      .on {
        width: 97px;
      }
    `,
  ];

  render() {
    return html`
      <header class="bar">
        <h2 class="name">Trade Performance</h2>
        <span class="grow"></span>
        ${controls([])}
      </header>
      <div class="panel">
        <div class="filters">
          <label for="display">Display</label>
          <div class="pick kind">
            <select id="display"><option>Trades ($)</option></select>
            ${icon("chevron")}
          </div>
          <div class="pick when">
            <select aria-label="From"><option>2025-12-31</option></select>
            <svg class="ico cal" viewBox="0 0 22 22" aria-hidden="true">${glyphs.calendar}</svg>
            ${icon("chevron")}
          </div>
          <div class="pick when">
            <select aria-label="To"><option>2026-02-09</option></select>
            <svg class="ico cal" viewBox="0 0 22 22" aria-hidden="true">${glyphs.calendar}</svg>
            ${icon("chevron")}
          </div>
        </div>
        <div class="grid">
          <table>
            <colgroup>
              ${[8, 52, 8, 8, 9, 8, 8, 8, 97, 225, 19].map((w) => html`<col width=${w} />`)}
            </colgroup>
            <thead>
              <tr>
                <th class="thin"></th>
                <th class="order"><div class="sort"><span>En</span>${icon("caret")}</div></th>
                ${[1, 2, 3, 4, 5, 6].map(() => html`<th class="thin"></th>`)}
                <th><span>Exit time</span></th>
                <th><span>Exit price</span></th>
                <th class="last"><span>P</span></th>
              </tr>
            </thead>
          </table>
        </div>
      </div>
      <nav class="tabs">
        <button class="on">Report</button>
        <button class="add" aria-label="Add tab">${icon("plus")}</button>
      </nav>
    `;
  }
}

/* ------------------------------------------------------------------ */
/* Market analyzer                                                     */
/* ------------------------------------------------------------------ */

const market = `
6A MA|31|2.23|0|0|0|0|1.68|102.8|660
6B MA|31|1.34|0|L|0|0|0.64|100.5|588
6C MA|34|1.99|0|L|0|0|1.14|94.6|390
6E MA|31|2.07|0|L|0|0|0.81|102.8|944
6J MA|31|1.42|0|L|SHOR|0|0.21|85|662
6N MA|31|1.32|0|0|0|0|1.26|96.5|540
6S MA|31|1.93|0|L|0|0|1.14|103.2|1369
CL MA|7|0.55|0|0|0|0|0.61|90.4|2070
ES MA|34|0.58|0|S|0|SHOR|0.19|101.8|4612
FDXS|38|1.34|0|S|0|0|-0.34|100.7|384
GC AP|45|0.59|0|0|SHOR|0|0.43|150.4|19770
HG MA|14|0.55|0|S|0|0|0.07|110.3|5675
HO MA|6|0.06|IB|0|0|0|0.46|104.9|3440
MBT F|10|0.2|LT|S|0|0|-1.75|61.6|471
NG MA|13|-0.74|0|0|0|0|0.27|91.7|3860
NQ MA|34|0.73|0|S|SHOR|0|-0.24|103.1|9855
PA MA|14|0.03|LT|S|0|SHOR|-0.37|153.8|15950
PL AP|45|0.11|LT|S|0|SHOR|-0.57|178.1|10670
RTY M|34|0.56|0|0|0|0|0.31|103.6|2650
RB MA|7|0.86|0|0|0|0|1|94.8|2281
SI MA|14|0.55|0|S|SHOR|0|-0.46|220.1|48425
YM MA|34|0.03|LT|0|LONG|0|0.69|100.2|3220
ZB MA|17|0.14|LT|S|0|0|0.19|91.9|812
ZC MA|7|-0.24|LT|0|LONG|0|0.08|73.2|300
ZF MA|17|0.62|0|0|0|0|0.61|92.8|250
ZL MA|8|1.95|0|0|0|0|1.44|108.7|654
ZN MA|17|0.45|0|0|0|0|0.45|93.4|391
ZO MA|7|-0.53|0|S|0|0|-0.04|76.5|425
ZS MA|8|-0.47|IB|L|0|0|1.27|92.8|850
ZW M|7|-0.15|LT|0|0|0|0.28|73.3|500`
  .trim()
  .split("\n")
  .map((r) => r.split("|"));

/** Share of the heat colour for the RRS and RC columns, 0 to 1. */
const warmth = (col: number, v: string) =>
  col === 8 ? (Number(v) - 60) / 160 : col === 9 ? Number(v) / 48425 : 0;

const tone = (col: number, v: string) => {
  if (v === "L" || v === "LONG") return "buy";
  if (v === "S" || v === "SHOR") return "sell";
  if (v === "IB" || v === "LT") return "info";
  const n = Number(v);
  if (col === 2 && n > 2) return "buy";
  if (col === 7 && n >= 1) return "buy";
  if (col === 7 && n <= -1) return "sell";
  const t = warmth(col, v);
  if (t > 0.7) return "hot";
  if (t > 0.3) return "warm";
  return "";
};

const heat = (col: number, v: string) => {
  const t = warmth(col, v);
  if (t <= 0.03) return nothing;
  return `background: color-mix(in srgb, #4682b4 ${Math.round(t * 100)}%, #1e1e1e)`;
};

@customElement("market-analyzer")
export class MarketAnalyzer extends LitElement {
  static styles = [
    shared,
    tabStyles,
    css`
      :host {
        display: flex;
        flex-direction: column;
        flex: 1;
        min-height: 0;
      }
      .stack {
        display: grid;
        gap: 3px;
        margin-left: 3px;
        flex: none;
      }
      .dom {
        padding: 0 8px 2px;
      }
      .ma {
        padding: 0 8px 2px 5px;
      }
      .swatch {
        align-self: stretch;
        width: 30px;
        margin-right: 2px;
        background: #058585;
      }
      .box {
        flex: 1;
        min-height: 0;
        margin: 10px 5px 0 7px;
        padding-bottom: 10px;
        background: #1e1e1e;
        border: 1px solid var(--edge);
      }
      table {
        height: 100%;
        font-family: var(--data);
        line-height: 20px;
      }
      th {
        border-top: 0;
      }
      th:first-child {
        border-left: 0;
      }
      th:last-child {
        border-right: 0;
      }
      td {
        padding: 0 0 0 8px;
        border-right: 1px solid #3f3f43;
        color: #747474;
        overflow: hidden;
        white-space: nowrap;
      }
      td:last-child {
        border-right: 0;
      }
      td:first-child {
        color: #ececec;
      }
      td:nth-child(9) {
        color: #858a8e;
      }
      td.warm {
        color: #9aa6b0;
      }
      td.hot {
        color: #b4c8da;
      }
      td.buy {
        background: #006400;
        color: #35ea35;
      }
      td.sell {
        background: #8b0000;
        color: #f01818;
      }
      td.info {
        background: #4682b4;
        color: #a9c4dc;
      }
      td:nth-child(9).warm {
        color: #9aa6b0;
      }
      td:nth-child(9).hot {
        color: #b4c8da;
      }
      tr.sel {
        background: #333337;
      }
      tr.sel td.buy {
        background: #2b3a2e;
      }
      .tabs {
        padding-left: 33px;
      }
      .on {
        width: 166px;
      }
      .micros {
        width: 94px;
      }
    `,
  ];

  render() {
    return html`
      <div class="stack">
        <header class="bar">
          <span class="swatch"></span>
          <h2 class="name dom">SuperDOM</h2>
          <span class="grow"></span>
          ${controls(["blue"])}
        </header>
        <header class="bar">
          <h2 class="name ma">Market Analyzer</h2>
          <span class="grow"></span>
          ${controls(["green"])}
        </header>
      </div>
      <div class="box">
        <table>
          <colgroup>
            ${[50, 41, 49, 37, 37, 54, 53, 42, 54, 53].map((w) => html`<col width=${w} />`)}
          </colgroup>
          <thead>
            <tr>
              ${["Instru", "Day", "RRR", "RIB", "HZ", "Setup", "Signa", "KSc", "RRS", "RC"].map(
                (t) => html`<th><span>${t}</span></th>`
              )}
            </tr>
          </thead>
          <tbody>
            ${market.map(
              (r) => html`
                <tr class=${r[0].startsWith("ZL") ? "sel" : ""}>
                  ${r.map((v, i) => html`<td class=${tone(i, v)} style=${heat(i, v)}>${v}</td>`)}
                </tr>
              `
            )}
          </tbody>
        </table>
      </div>
      <nav class="tabs">
        <button class="on">Remek! Premium</button>
        <button class="micros">Micros</button>
        <button class="add" aria-label="Add tab">${icon("plus")}</button>
      </nav>
    `;
  }
}

/* ------------------------------------------------------------------ */
/* Workspace                                                           */
/* ------------------------------------------------------------------ */

@customElement("app-root")
export class AppRoot extends LitElement {
  static styles = [
    shared,
    css`
      :host {
        display: block;
      }
      .desk {
        display: grid;
        grid-template-columns: 618fr 1398fr 484fr;
        height: 100vh;
        background: #2d2d30;
        overflow: hidden;
      }
      .left,
      .mid,
      .side {
        min-width: 0;
        min-height: 0;
      }
      .left {
        display: grid;
        grid-template-rows: 671fr 691fr;
        --inset: 5px;
      }
      .mid {
        display: grid;
        grid-template-columns: 698fr 700fr;
        grid-template-rows: 430fr 932fr;
      }
      .second {
        --inset: 8px;
      }
      .daily {
        grid-column: 1 / 3;
      }
      .left chart-window {
        padding-bottom: 5px;
      }
      .mid chart-window {
        padding-left: 4px;
        padding-bottom: 8px;
      }
      .left .lower {
        padding-top: 3px;
        padding-bottom: 3px;
      }
      .mid .lower {
        padding-top: 3px;
        padding-bottom: 3px;
      }
      .side {
        display: flex;
        flex-direction: column;
        padding-left: 2px;
        border-left: 1px solid #3a3a3d;
      }
    `,
  ];

  render() {
    return html`
      <main class="desk">
        <section class="left">
          <chart-window .spec=${chart240} interval="240 Minute" .tools=${["candles"]} menu></chart-window>
          <chart-window class="lower" .spec=${chartWeekly} interval="Weekly" .tools=${["candles"]} menu></chart-window>
        </section>
        <section class="mid">
          <chart-window .spec=${chart60} interval="60 Minute" .tools=${["bars", "pencil", "zoomin"]} menu></chart-window>
          <chart-window
            class="second"
            .spec=${chart15}
            interval="15 Minute"
            .tools=${["bars", "pencil", "zoomin"]}
            menu
          ></chart-window>
          <chart-window
            class="daily lower"
            .spec=${chartDaily}
            interval="Daily"
            .tools=${["candles", "pencil", "zoomin", "zoomout", "cursor", "docsearch", "panel", "frame", "nodes", "strategy", "list"]}
          ></chart-window>
        </section>
        <aside class="side">
          <control-center></control-center>
          <trade-performance></trade-performance>
          <market-analyzer></market-analyzer>
        </aside>
      </main>
    `;
  }
}
